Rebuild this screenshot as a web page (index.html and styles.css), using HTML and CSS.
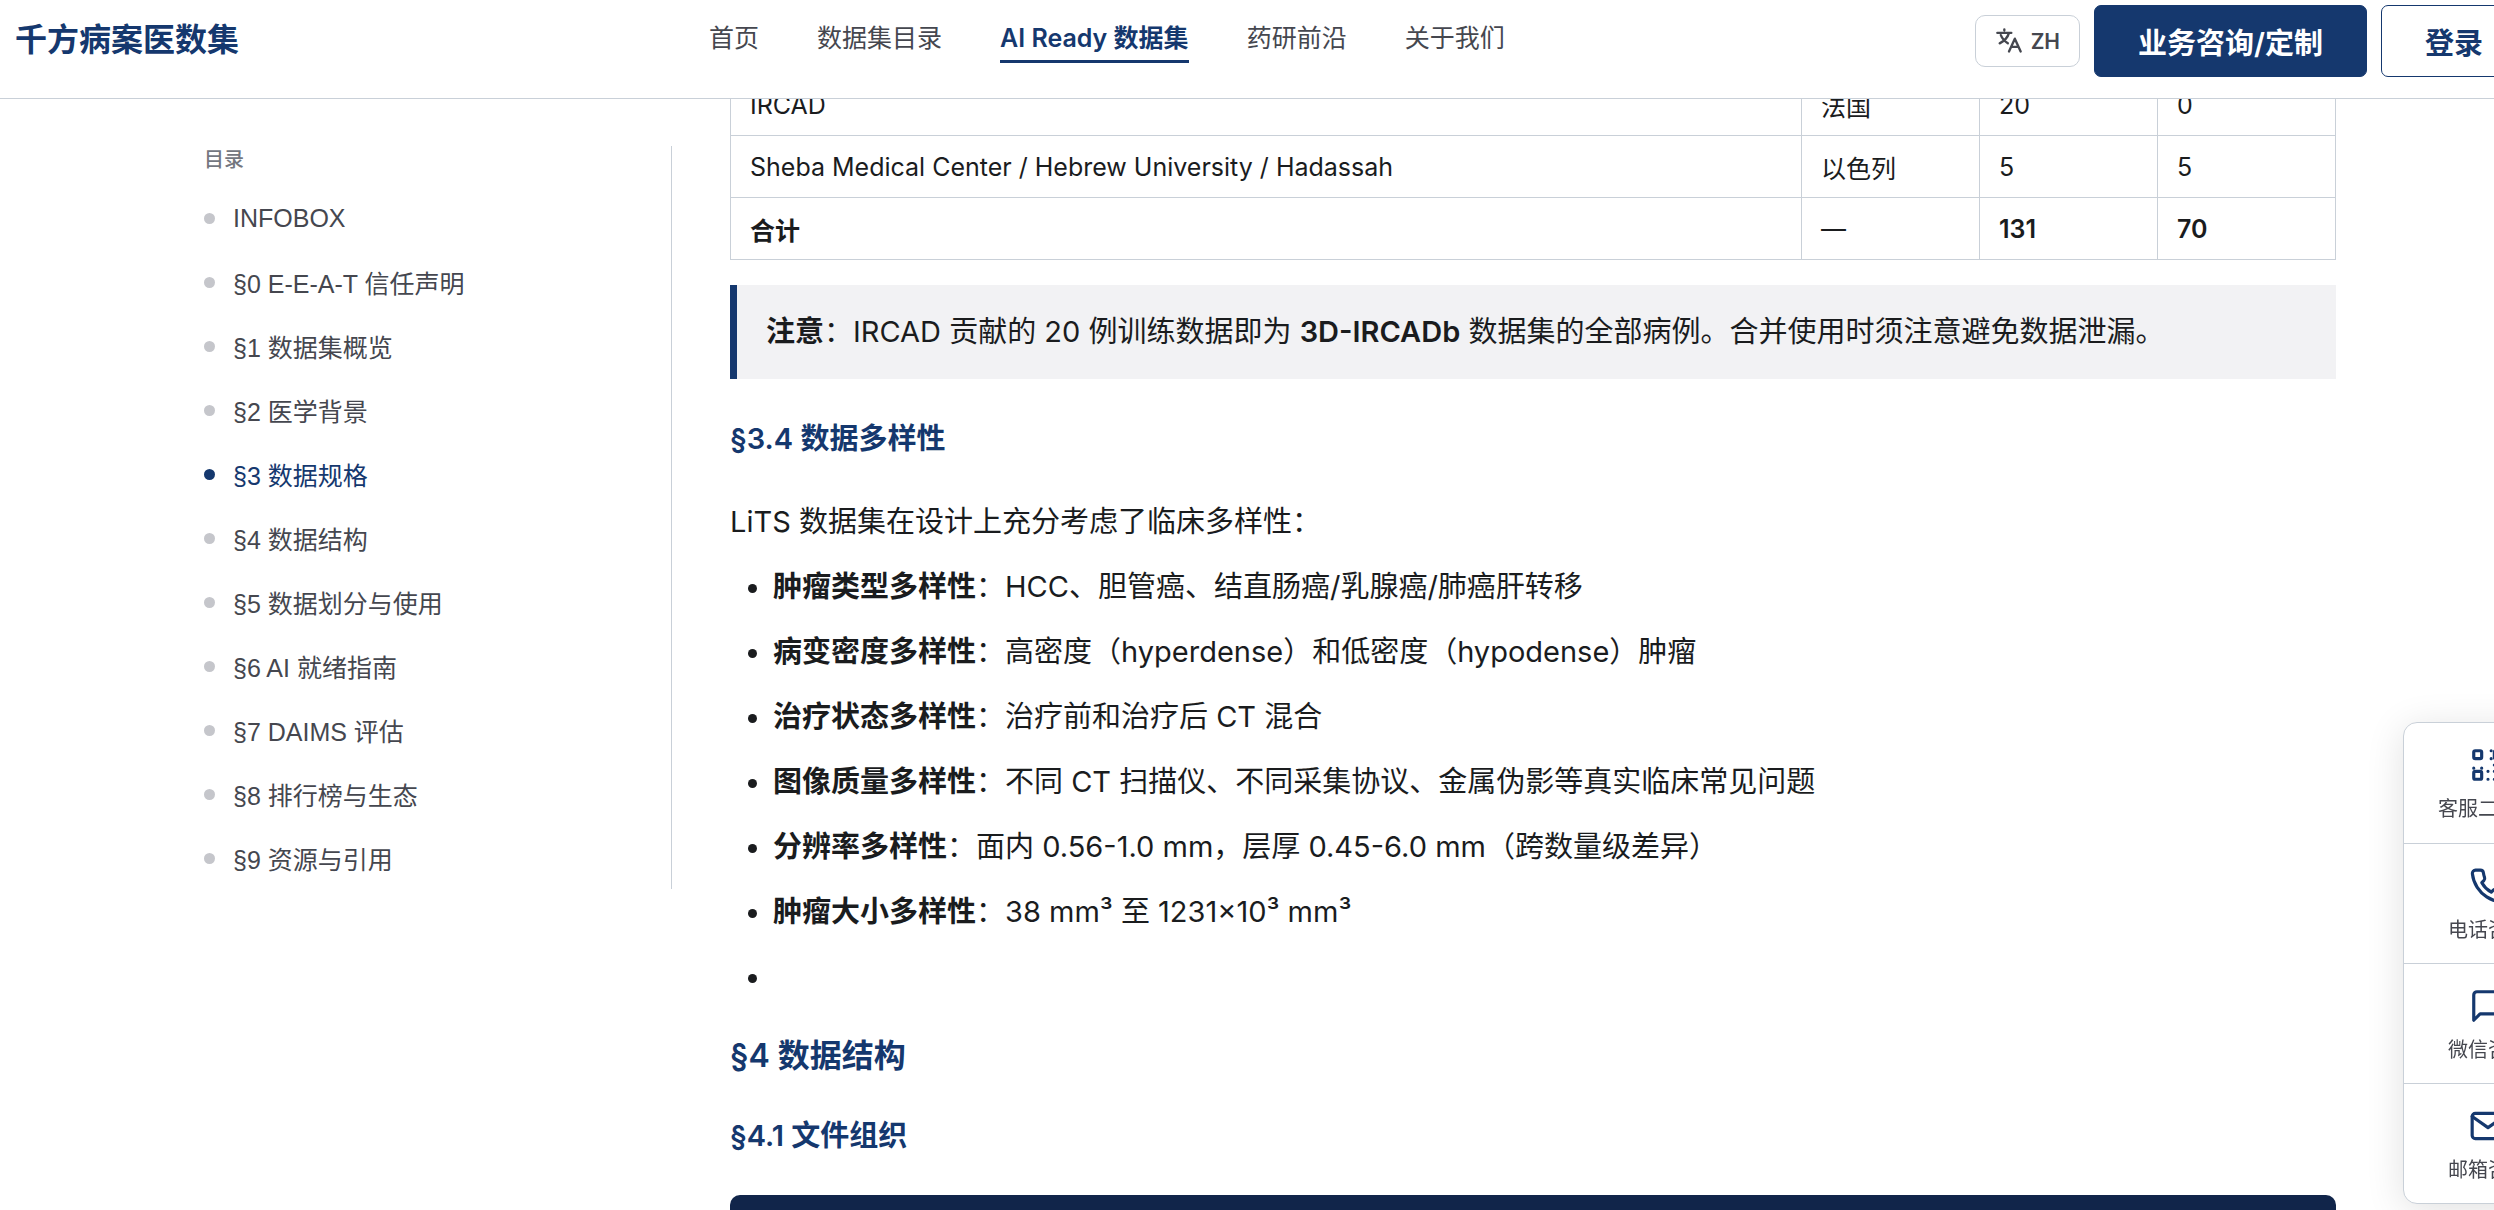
FILE: index.html
```html
<!DOCTYPE html>
<html lang="zh-CN">

<head>
    <meta charset="UTF-8">
    <meta name="viewport" content="width=device-width, initial-scale=1.0">
    <title>千方病案医数集</title>
    <link rel="stylesheet" href="styles.css">
</head>

<body>
    <header class="header">
        <a class="logo" href="#">千方病案医数集</a>
        <nav class="nav">
            <a href="#">首页</a>
            <a href="#">数据集目录</a>
            <a class="active" href="#">AI Ready 数据集</a>
            <a href="#">药研前沿</a>
            <a href="#">关于我们</a>
        </nav>
        <div class="actions">
            <button class="lang" type="button">
                <svg viewBox="0 0 24 24" fill="none" stroke="currentColor" stroke-width="2" stroke-linecap="round" stroke-linejoin="round">
                    <path d="M2 5h12M8 2v1M12 5c-1 3.600-4 7-8 9M5 7c1 2.600 3 5 6 7M12 21l5-11 5 11M14 17h6" />
                </svg>
                ZH
            </button>
            <button class="btn btn-primary" type="button">业务咨询/定制</button>
            <button class="btn" type="button">登录</button>
        </div>
    </header>

    <div class="page">
        <aside class="toc">
            <div class="toc-title">目录</div>
            <ul>
                <li><a href="#">INFOBOX</a></li>
                <li><a href="#">§0 E-E-A-T 信任声明</a></li>
                <li><a href="#">§1 数据集概览</a></li>
                <li><a href="#">§2 医学背景</a></li>
                <li><a class="active" href="#">§3 数据规格</a></li>
                <li><a href="#s4">§4 数据结构</a></li>
                <li><a href="#">§5 数据划分与使用</a></li>
                <li><a href="#">§6 AI 就绪指南</a></li>
                <li><a href="#">§7 DAIMS 评估</a></li>
                <li><a href="#">§8 排行榜与生态</a></li>
                <li><a href="#">§9 资源与引用</a></li>
            </ul>
        </aside>

        <main class="content">
            <table>
                <colgroup>
                    <col>
                    <col class="col-small">
                    <col class="col-small">
                    <col class="col-small">
                </colgroup>
                <tbody>
                    <tr>
                        <td>IRCAD</td>
                        <td>法国</td>
                        <td>20</td>
                        <td>0</td>
                    </tr>
                    <tr>
                        <td>Sheba Medical Center / Hebrew University / Hadassah</td>
                        <td>以色列</td>
                        <td>5</td>
                        <td>5</td>
                    </tr>
                    <tr>
                        <td><strong>合计</strong></td>
                        <td>—</td>
                        <td><strong>131</strong></td>
                        <td><strong>70</strong></td>
                    </tr>
                </tbody>
            </table>

            <blockquote><strong>注意</strong>：IRCAD 贡献的 20 例训练数据即为 <strong>3D-IRCADb</strong> 数据集的全部病例。合并使用时须注意避免数据泄漏。</blockquote>

            <h3>§3.4 数据多样性</h3>
            <p>LiTS 数据集在设计上充分考虑了临床多样性：</p>
            <ul class="list">
                <li><strong>肿瘤类型多样性</strong>：HCC、胆管癌、结直肠癌/乳腺癌/肺癌肝转移</li>
                <li><strong>病变密度多样性</strong>：高密度（hyperdense）和低密度（hypodense）肿瘤</li>
                <li><strong>治疗状态多样性</strong>：治疗前和治疗后 CT 混合</li>
                <li><strong>图像质量多样性</strong>：不同 CT 扫描仪、不同采集协议、金属伪影等真实临床常见问题</li>
                <li><strong>分辨率多样性</strong>：面内 0.56-1.0 mm，层厚 0.45-6.0 mm（跨数量级差异）</li>
                <li><strong>肿瘤大小多样性</strong>：38 mm³ 至 1231×10³ mm³</li>
                <li></li>
            </ul>

            <h2 id="s4">§4 数据结构</h2>
            <h3>§4.1 文件组织</h3>
            <pre></pre>
        </main>
    </div>

    <div class="float-bar">
        <button type="button">
            <svg viewBox="0 0 24 24">
                <rect x="3" y="3" width="5" height="5" rx="1" />
                <rect x="16" y="3" width="5" height="5" rx="1" />
                <rect x="3" y="16" width="5" height="5" rx="1" />
                <path d="M3 14v.01M8 14v.01M14 3v.01M14 8v.01M12 16v.01M12 21v.01M16 12v.01M16 16v.01M16 21v.01M21 12v.01M21 16v.01M21 21v.01" />
            </svg>
            客服二维码
        </button>
        <button type="button">
            <svg viewBox="0 0 24 24">
                <path d="M22 16.92v3a2 2 0 0 1-2.18 2 19.79 19.79 0 0 1-8.63-3.07 19.5 19.5 0 0 1-6-6 19.79 19.79 0 0 1-3.07-8.67A2 2 0 0 1 4.11 2h3a2 2 0 0 1 2 1.72c.13.96.36 1.9.7 2.81a2 2 0 0 1-.45 2.11L8.09 9.91a16 16 0 0 0 6 6l1.27-1.27a2 2 0 0 1 2.11-.45c.91.34 1.85.57 2.81.7A2 2 0 0 1 22 16.92z" />
            </svg>
            电话咨询
        </button>
        <button type="button">
            <svg viewBox="0 0 24 24">
                <path d="M21 15a2 2 0 0 1-2 2H7l-4 4V5a2 2 0 0 1 2-2h14a2 2 0 0 1 2 2z" />
            </svg>
            微信咨询
        </button>
        <button type="button">
            <svg viewBox="0 0 24 24">
                <rect x="2" y="4" width="20" height="16" rx="2" />
                <path d="M22 6l-10 7L2 6" />
            </svg>
            邮箱咨询
        </button>
    </div>
</body>

</html>
```
FILE: styles.css
```css
* {
    box-sizing: border-box;
    margin: 0;
    padding: 0;
}

body {
    height: 100vh;
    overflow: hidden;
    background: #fff;
    color: #1a1c1e;
    font-family: Inter, "Noto Sans CJK SC", sans-serif;
    font-size: 29px;
}

a {
    color: inherit;
    text-decoration: none;
}

ul {
    list-style: none;
}

button {
    font-family: inherit;
    cursor: pointer;
}

strong {
    font-weight: 600;
}

/* header */
.header {
    position: fixed;
    top: 0;
    left: 0;
    z-index: 10;
    display: flex;
    align-items: flex-start;
    justify-content: space-between;
    width: calc(100% + 48px);
    height: 99px;
    padding: 5px 15px;
    background: #fff;
    border-bottom: 1px solid #c9d0d8;
}

.logo {
    color: #15386e;
    font-size: 32px;
    font-weight: 700;
    line-height: 70px;
}

.nav {
    display: flex;
    gap: 58px;
    padding-top: 13px;
    color: #45474f;
    font-size: 25px;
    line-height: 40px;
}

.nav a {
    padding-bottom: 2px;
}

.nav .active {
    color: #15386e;
    font-weight: 600;
    border-bottom: 3px solid #15386e;
}

.actions {
    display: flex;
    align-items: center;
    gap: 14px;
}

.lang {
    display: flex;
    align-items: center;
    gap: 8px;
    height: 52px;
    padding: 0 19px;
    background: #fff;
    border: 1px solid #c9d0d8;
    border-radius: 10px;
    color: #45474f;
    font-size: 21px;
    font-weight: 600;
}

.lang svg {
    width: 28px;
    height: 28px;
}

.btn {
    height: 72px;
    padding: 0 43px;
    background: #fff;
    border: 1px solid #15386e;
    border-radius: 7px;
    color: #15386e;
    font-size: 29px;
    font-weight: 600;
}

.btn-primary {
    background: #15386e;
    color: #fff;
}

/* page */
.page {
    display: flex;
    gap: 58px;
    padding: 73px 158px 0 204px;
}

.toc {
    flex: 0 0 468px;
    align-self: flex-start;
    height: 743px;
    margin-top: 73px;
    border-right: 1px solid #c9d0d8;
    color: #45474f;
    font-family: "Liberation Sans", "Noto Sans CJK SC", sans-serif;
    font-size: 25px;
}

.toc-title {
    color: #74777f;
    font-size: 20px;
    font-weight: 500;
    line-height: 28px;
    margin-bottom: 12px;
}

.toc a {
    display: flex;
    align-items: center;
    gap: 18px;
    height: 64px;
}

.toc a::before {
    content: "";
    width: 11px;
    height: 11px;
    border-radius: 50%;
    background: #c5c6cb;
}

.toc .active {
    color: #15386e;
}

.toc .active::before {
    background: #15386e;
}

.content {
    flex: 1;
    min-width: 0;
}

table {
    width: 100%;
    border-collapse: collapse;
    table-layout: fixed;
    font-size: 25px;
}

.col-small {
    width: 178px;
}

td {
    height: 62px;
    padding: 0 19px;
    border: 1px solid #c9d0d8;
}

blockquote {
    margin-top: 25px;
    padding: 22px 29px;
    background: #f2f2f4;
    border-left: 7px solid #15386e;
    line-height: 50px;
}

h2,
h3 {
    color: #15386e;
    font-weight: 600;
    line-height: 40px;
}

h2 {
    margin-top: 27px;
    font-size: 32px;
}

h3 {
    margin-top: 40px;
    font-size: 29px;
}

p {
    margin-top: 38px;
    line-height: 50px;
}

.list {
    padding-left: 43px;
    margin-top: 7px;
    list-style: disc;
}

.list li {
    height: 65px;
    line-height: 65px;
}

pre {
    height: 300px;
    margin-top: 39px;
    background: #11254a;
    border-radius: 10px;
}

/* contact bar */
.float-bar {
    position: fixed;
    right: -79px;
    bottom: 6px;
    display: flex;
    flex-direction: column;
    width: 170px;
    background: #fff;
    border: 1px solid #c9d0d8;
    border-radius: 14px;
    box-shadow: 0 6px 38px rgba(0, 0, 0, 0.12);
    overflow: hidden;
}

.float-bar button {
    display: flex;
    flex-direction: column;
    align-items: center;
    justify-content: center;
    gap: 10px;
    height: 120px;
    padding-top: 4px;
    background: none;
    border: 0;
    color: #45474f;
    font-size: 20px;
    line-height: 30px;
}

.float-bar button + button {
    border-top: 1px solid #c9d0d8;
}

.float-bar svg {
    width: 38px;
    height: 38px;
    fill: none;
    stroke: #15386e;
    stroke-width: 2;
    stroke-linecap: round;
    stroke-linejoin: round;
}
```
